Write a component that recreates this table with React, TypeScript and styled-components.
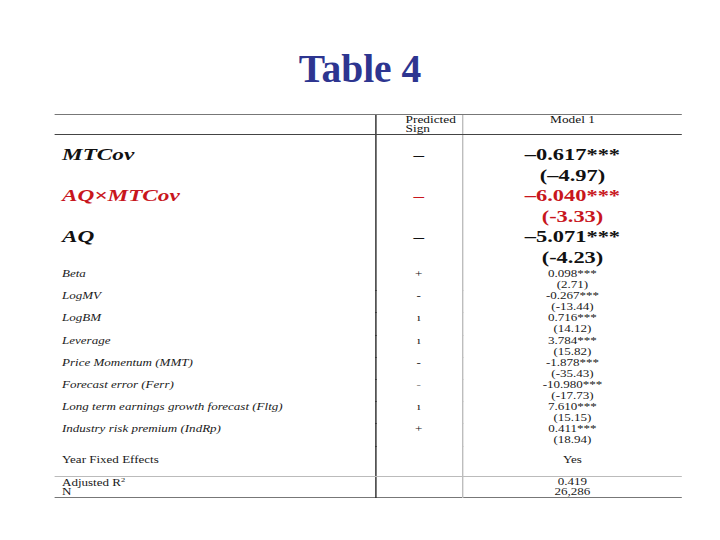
import styled, { createGlobalStyle } from "styled-components";

// the table is a picture pasted in stretched sideways, so lay it out narrow and widen it
const STRETCH = 1.4;

const GlobalStyle = createGlobalStyle`
  html, body {
    margin: 0;
    padding: 0;
    background: #ffffff;
    overflow: hidden;
  }
`;

const Slide = styled.div`
  width: 720px;
  height: 540px;
  padding-top: 49px;
  box-sizing: border-box;
  font-family: "Liberation Serif", "Times New Roman", serif;
  color: #111;
  overflow: hidden;
`;

const Title = styled.h1`
  margin: 0;
  font-size: 39.5px;
  line-height: 40px;
  font-weight: 700;
  text-align: center;
  color: #2d3590;
`;

const Stretched = styled.div`
  width: ${720 / STRETCH}px;
  transform: scaleX(${STRETCH});
  transform-origin: 0 0;
  padding-top: 25px;
`;

const Table = styled.div`
  margin-left: ${55 / STRETCH}px;
  width: ${(682 - 55) / STRETCH}px;
  border-top: 1px solid #777;
  border-bottom: 1px solid #777;
`;

const Row = styled.div<{ $height: number; $rule?: "dark" | "light" }>`
  display: grid;
  grid-template-columns: ${(376 - 55) / STRETCH}px ${(463 - 376) / STRETCH}px 1fr;
  height: ${(p) => p.$height}px;
  border-bottom: ${(p) =>
    p.$rule === "dark" ? "1px solid #444" : p.$rule === "light" ? "1px solid #bbb" : "none"};
`;

const LabelCell = styled.div<{ $align?: "top" | "center"; $pad?: number }>`
  border-right: 1px solid #2a2a2a;
  padding: ${(p) => p.$pad ?? 0}px 0 0 5px;
  display: flex;
  flex-direction: column;
  justify-content: ${(p) => (p.$align === "center" ? "center" : "flex-start")};
`;

const SignCell = styled.div<{ $pad?: number }>`
  border-right: 1px solid #bdbdbd;
  padding-top: ${(p) => p.$pad ?? 0}px;
  display: flex;
  justify-content: center;
  align-items: flex-start;
`;

const ValueCell = styled.div<{ $align?: "top" | "center"; $pad?: number }>`
  padding-top: ${(p) => p.$pad ?? 0}px;
  display: flex;
  flex-direction: column;
  align-items: center;
  justify-content: ${(p) => (p.$align === "center" ? "center" : "flex-start")};
`;

const HeadText = styled.div<{ $left?: boolean }>`
  align-self: ${(p) => (p.$left ? "flex-start" : "center")};
  padding: 1px 0 0 ${(p) => (p.$left ? 17 : 0)}px;
  font-size: 9.5px;
  line-height: 8.5px;
`;

const BigLabel = styled.span<{ $red?: boolean }>`
  font-size: 16.6px;
  line-height: 20.5px;
  font-weight: 700;
  font-style: italic;
  color: ${(p) => (p.$red ? "#c8161d" : "#111")};
`;

const BigSign = styled(BigLabel)`
  font-style: normal;
  font-size: 15px;
`;

const BigValue = styled.span<{ $red?: boolean }>`
  font-size: 16px;
  line-height: 20.5px;
  font-weight: 700;
  white-space: nowrap;
  color: ${(p) => (p.$red ? "#c8161d" : "#111")};
`;

const SmallText = styled.span<{ $italic?: boolean; $faint?: boolean; $tight?: boolean }>`
  display: block;
  font-size: 9.3px;
  line-height: ${(p) => (p.$tight ? 9.8 : 11.1)}px;
  font-style: ${(p) => (p.$italic ? "italic" : "normal")};
  color: ${(p) => (p.$faint ? "#888" : "#1a1a1a")};
  white-space: nowrap;
  text-align: center;
`;

const LeftText = styled(SmallText)`
  text-align: left;
`;

const Sup = styled.sup`
  font-size: 6px;
  line-height: 0;
`;

const mainRows = [
  { label: "MTCov", coef: "–0.617***", t: "(–4.97)", red: false },
  { label: "AQ×MTCov", coef: "–6.040***", t: "(-3.33)", red: true },
  { label: "AQ", coef: "–5.071***", t: "(-4.23)", red: false },
];

const controls = [
  { label: "Beta", sign: "+", coef: "0.098***", t: "(2.71)" },
  { label: "LogMV", sign: "-", coef: "-0.267***", t: "(-13.44)" },
  { label: "LogBM", sign: "ı", coef: "0.716***", t: "(14.12)" },
  { label: "Leverage", sign: "ı", coef: "3.784***", t: "(15.82)" },
  { label: "Price Momentum (MMT)", sign: "-", coef: "-1.878***", t: "(-35.43)" },
  { label: "Forecast error (Ferr)", sign: "-", coef: "-10.980***", t: "(-17.73)", faint: true },
  { label: "Long term earnings growth forecast (Fltg)", sign: "ı", coef: "7.610***", t: "(15.15)" },
  { label: "Industry risk premium (IndRp)", sign: "+", coef: "0.411***", t: "(18.94)" },
];

export default function App() {
  return (
    <>
      <GlobalStyle />
      <Slide>
        <Title>Table 4</Title>
        <Stretched>
          <Table>
            <Row $height={19} $rule="dark">
              <LabelCell />
              <SignCell>
                <HeadText $left>
                  Predicted
                  <br />
                  Sign
                </HeadText>
              </SignCell>
              <ValueCell>
                <HeadText>Model 1</HeadText>
              </ValueCell>
            </Row>

            <Row $height={10}>
              <LabelCell />
              <SignCell />
              <ValueCell />
            </Row>

            {mainRows.map((r) => (
              <Row key={r.label} $height={41}>
                <LabelCell>
                  <BigLabel $red={r.red}>{r.label}</BigLabel>
                </LabelCell>
                <SignCell>
                  <BigSign $red={r.red}>–</BigSign>
                </SignCell>
                <ValueCell>
                  <BigValue $red={r.red}>{r.coef}</BigValue>
                  <BigValue $red={r.red}>{r.t}</BigValue>
                </ValueCell>
              </Row>
            ))}

            {controls.map((r) => (
              <Row key={r.label} $height={22.2}>
                <LabelCell $pad={1}>
                  <LeftText $italic>{r.label}</LeftText>
                </LabelCell>
                <SignCell $pad={1}>
                  <SmallText $faint={r.faint}>{r.sign}</SmallText>
                </SignCell>
                <ValueCell $pad={1}>
                  <SmallText>{r.coef}</SmallText>
                  <SmallText>{r.t}</SmallText>
                </ValueCell>
              </Row>
            ))}

            <Row $height={30} $rule="light">
              <LabelCell $align="center">
                <LeftText>Year Fixed Effects</LeftText>
              </LabelCell>
              <SignCell />
              <ValueCell $align="center">
                <SmallText>Yes</SmallText>
              </ValueCell>
            </Row>

            <Row $height={20}>
              <LabelCell $pad={2}>
                <LeftText $tight>
                  Adjusted R<Sup>2</Sup>
                </LeftText>
                <LeftText $tight>N</LeftText>
              </LabelCell>
              <SignCell />
              <ValueCell $pad={1.5}>
                <SmallText $tight>0.419</SmallText>
                <SmallText $tight>26,286</SmallText>
              </ValueCell>
            </Row>
          </Table>
        </Stretched>
      </Slide>
    </>
  );
}
